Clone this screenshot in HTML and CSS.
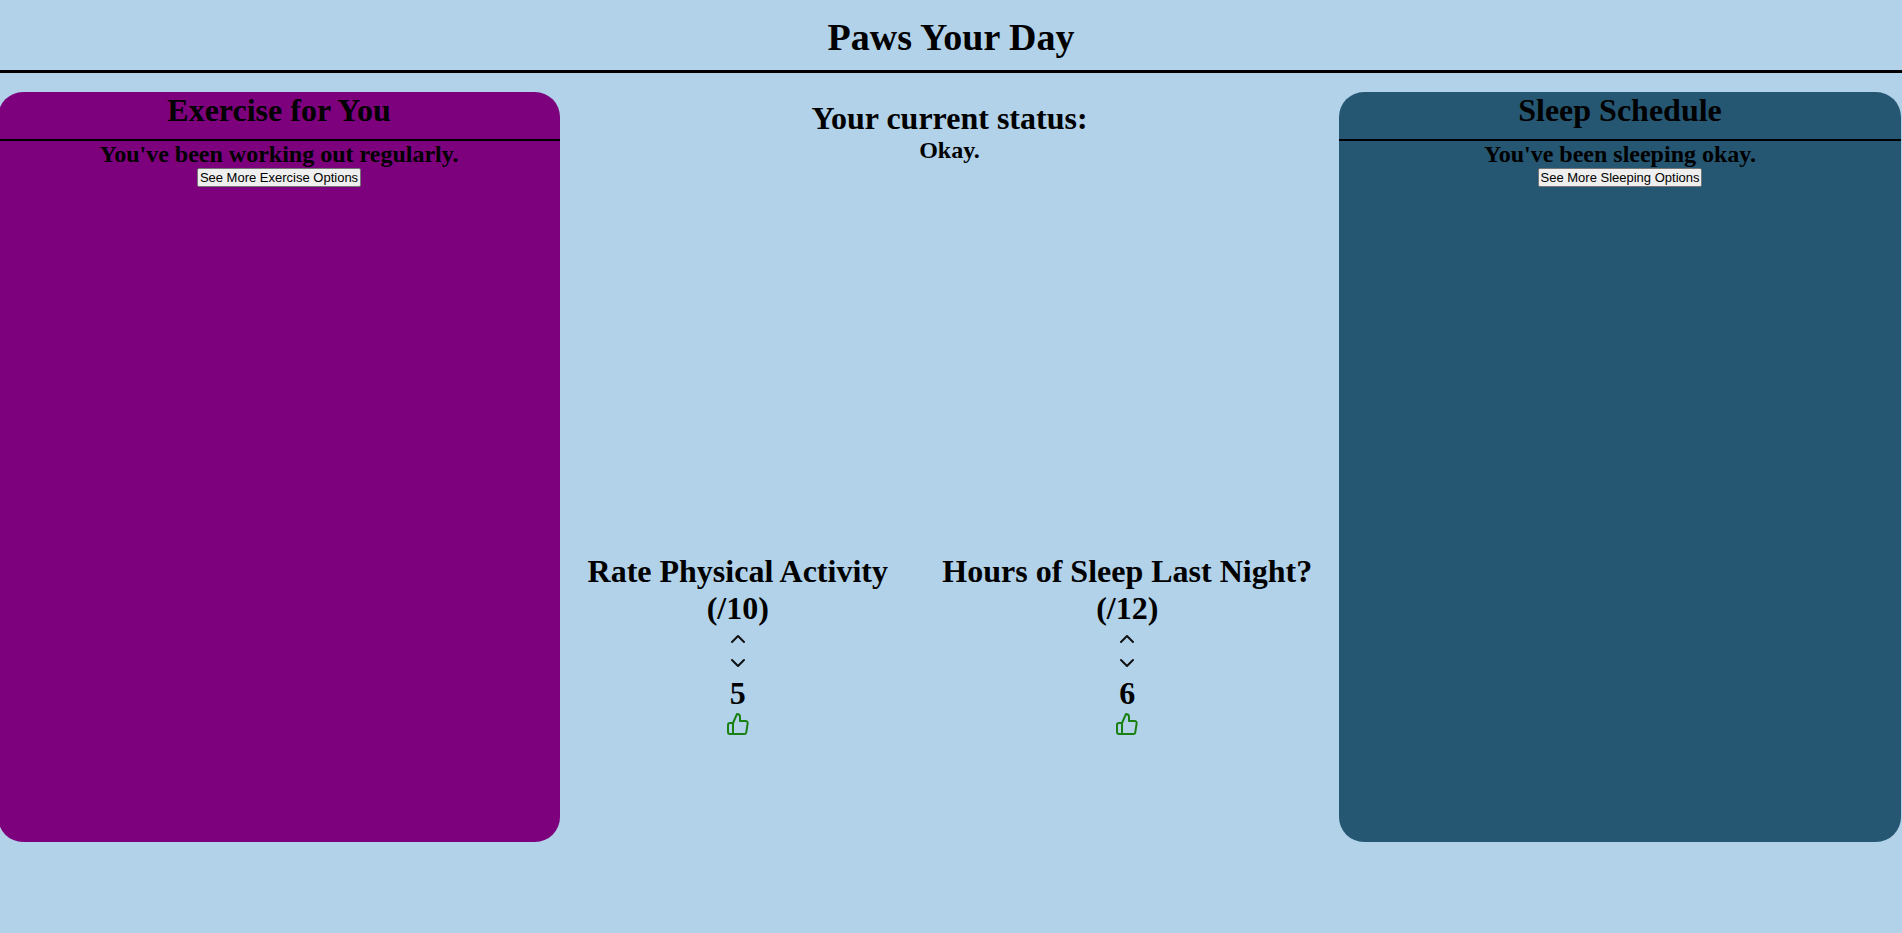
FILE: index.html
```html
<!DOCTYPE html>
<html lang="en">
<head>
<meta charset="utf-8">
<title>Paws Your Day</title>
<link rel="stylesheet" href="styles.css">
</head>
<body>
<header class="header"><h1 class="title">Paws Your Day</h1></header>
<main class="layout">
  <section class="panel panel-exercise">
    <h2 class="heading panel-heading">Exercise for You</h2>
    <h3 class="message">You've been working out regularly.</h3>
    <button class="more" type="button">See More Exercise Options</button>
  </section>
  <div class="center">
    <section class="status">
      <h2 class="heading">Your current status:</h2>
      <h3 class="message">Okay.</h3>
    </section>
    <div class="ratings">
      <section class="rating">
        <h2 class="heading rating-heading">Rate Physical Activity<br>(/10)</h2>
        <button class="step" type="button" aria-label="Increase activity"><svg class="icon" viewBox="0 0 24 24"><polyline points="18 15 12 9 6 15"/></svg></button>
        <button class="step" type="button" aria-label="Decrease activity"><svg class="icon" viewBox="0 0 24 24"><polyline points="6 9 12 15 18 9"/></svg></button>
        <p class="heading">5</p>
        <svg class="icon icon-good" viewBox="0 0 24 24"><path d="M14 9V5a3 3 0 0 0-3-3l-4 9v11h11.28a2 2 0 0 0 2-1.7l1.38-9a2 2 0 0 0-2-2.300zM7 22H4a2 2 0 0 1-2-2v-7a2 2 0 0 1 2-2h3"/></svg>
      </section>
      <section class="rating">
        <h2 class="heading rating-heading">Hours of Sleep Last Night?<br>(/12)</h2>
        <button class="step" type="button" aria-label="Increase sleep"><svg class="icon" viewBox="0 0 24 24"><polyline points="18 15 12 9 6 15"/></svg></button>
        <button class="step" type="button" aria-label="Decrease sleep"><svg class="icon" viewBox="0 0 24 24"><polyline points="6 9 12 15 18 9"/></svg></button>
        <p class="heading">6</p>
        <svg class="icon icon-good" viewBox="0 0 24 24"><path d="M14 9V5a3 3 0 0 0-3-3l-4 9v11h11.28a2 2 0 0 0 2-1.7l1.38-9a2 2 0 0 0-2-2.300zM7 22H4a2 2 0 0 1-2-2v-7a2 2 0 0 1 2-2h3"/></svg>
      </section>
    </div>
  </div>
  <section class="panel panel-sleep">
    <h2 class="heading panel-heading">Sleep Schedule</h2>
    <h3 class="message">You've been sleeping okay.</h3>
    <button class="more" type="button">See More Sleeping Options</button>
  </section>
</main>
</body>
</html>
```
FILE: styles.css
```css
* {
  box-sizing: border-box;
  margin: 0;
  padding: 0;
}

body {
  background: #b1d2e9;
  color: #000;
  font-family: "Liberation Serif", "Times New Roman", serif;
  text-align: center;
  overflow-x: hidden;
}

.header {
  padding: 16px 0 12px;
  border-bottom: 3px solid #000;
}

.title {
  font-size: 38px;
  line-height: 42px;
}

.heading {
  font-size: 32px;
  font-weight: bold;
  line-height: 37px;
}

.message {
  font-size: 24px;
  line-height: 27px;
}

.layout {
  display: grid;
  grid-template-columns: 562fr 779fr 562fr;
  margin: 19px 1px 0 -2px;
}

.panel {
  min-height: 750px;
  border-radius: 25px;
}

.panel-exercise {
  background: #7d007d;
}

.panel-sleep {
  background: #255672;
}

.panel-heading {
  padding-bottom: 10px;
  border-bottom: 2px solid #000;
}

.more {
  display: block;
  margin: 0 auto;
  padding: 0 2px;
  border: 1px solid #767676;
  border-radius: 2px;
  background: #efefef;
  color: #000;
  font-family: "Liberation Sans", Arial, sans-serif;
  font-size: 13px;
  line-height: 17px;
}

.center {
  display: grid;
  grid-template-rows: 453px auto;
  padding-top: 8px;
}

.ratings {
  display: grid;
  grid-template-columns: 1fr 1fr;
}

.rating {
  display: flex;
  flex-direction: column;
  align-items: center;
  min-width: 0;
  padding-right: 34px;
}

.rating-heading {
  white-space: nowrap;
}

.step {
  border: 0;
  background: none;
  color: #111;
  cursor: pointer;
}

.icon {
  display: block;
  width: 24px;
  height: 24px;
  fill: none;
  stroke: currentColor;
  stroke-width: 2;
  stroke-linecap: round;
  stroke-linejoin: round;
}

.icon-good {
  color: #1b8014;
}
```
